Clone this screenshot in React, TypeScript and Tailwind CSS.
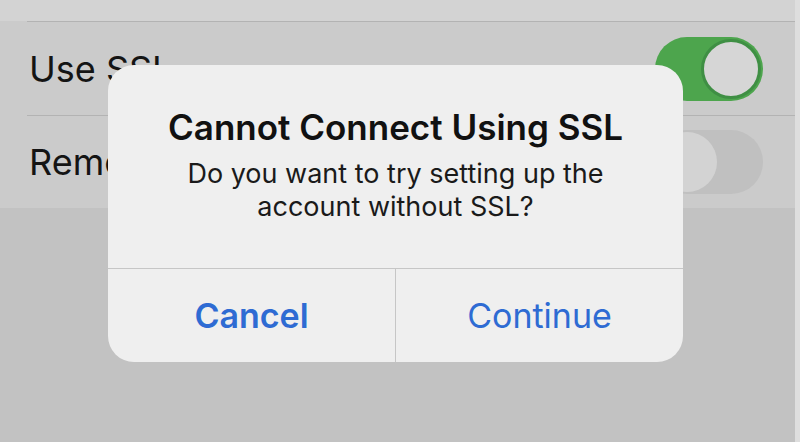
import React from "react";

const font = { fontFamily: "Inter, 'Liberation Sans', sans-serif" };

const Toggle = ({ on }: { on: boolean }) => (
  <div
    className={`flex h-[64px] w-[108px] items-center rounded-full px-[2px] ${
      on ? "justify-end bg-[#4da54d]" : "justify-start bg-[#c0c0c0]"
    }`}
  >
    <div
      className={`h-[60px] w-[60px] rounded-full ${
        on ? "border-[3px] border-[#3f8f44] bg-[#d6d6d6]" : "bg-[#d3d3d3]"
      }`}
    />
  </div>
);

const SettingsRow = ({ label, on, height }: { label: string; on: boolean; height: string }) => (
  <div className="bg-[#cbcbcb] pl-[27px]">
    <div className={`flex items-center justify-between border-t border-[#b3b3b3] pr-[32px] ${height}`}>
      <span className="pl-[2px] text-[36px] text-[#141414]">{label}</span>
      <Toggle on={on} />
    </div>
  </div>
);

export default function App() {
  return (
    <div className="relative flex h-[442px] w-[800px] overflow-hidden bg-[#c2c2c2]" style={font}>
      <div className="flex flex-1 flex-col">
        <div className="h-[21px] bg-[#d3d3d3]" />
        <SettingsRow label="Use SSL" on={true} height="h-[94px]" />
        <SettingsRow label="Remove from Server" on={false} height="h-[93px]" />
        <div className="flex-1 bg-[#c2c2c2]" />
      </div>
      <div className="w-[5px] bg-[#dedede]" />

      {/* alert */}
      <div className="absolute left-[108px] top-[65px] flex h-[297px] w-[575px] flex-col rounded-[26px] bg-[#efefef]">
        <div className="flex h-[203px] flex-col items-center pt-[42px] text-center">
          <div className="text-[35px] font-semibold leading-[40px] text-[#111111]">Cannot Connect Using SSL</div>
          <div className="mt-[10px] text-[27px] leading-[33px] text-[#1a1a1a]">
            Do you want to try setting up the
            <br />
            account without SSL?
          </div>
        </div>
        <div className="flex flex-1 border-t border-[#c6c6c6]">
          <button className="flex flex-1 items-center justify-center border-r border-[#c6c6c6] text-[34px] font-semibold text-[#2e6bd3]">
            Cancel
          </button>
          <button className="flex flex-1 items-center justify-center text-[34px] text-[#2e6bd3]">
            Continue
          </button>
        </div>
      </div>
    </div>
  );
}
